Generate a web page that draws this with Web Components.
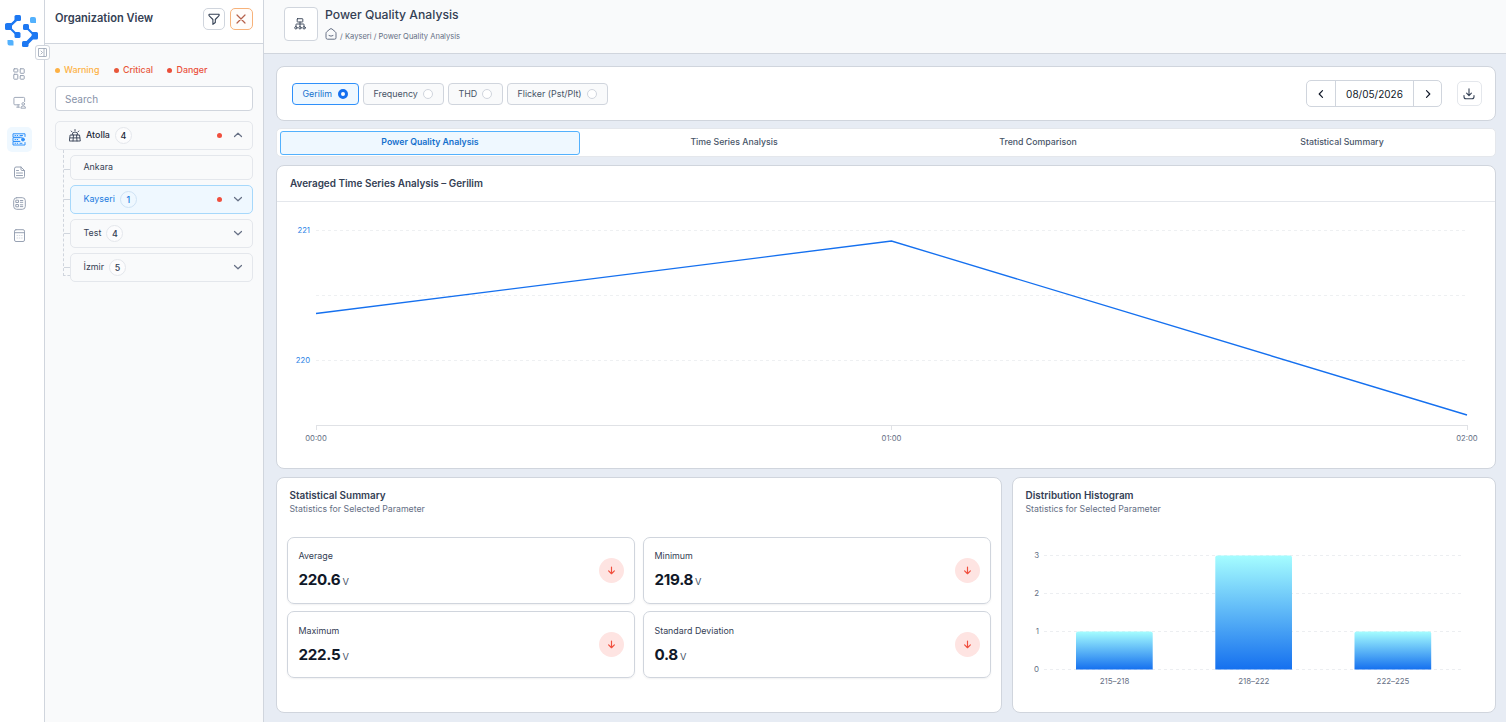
<!DOCTYPE html>
<html lang="en">
<head>
<meta charset="utf-8">
<title>Power Quality Analysis</title>
<style>
  body {
    margin: 0;
    height: 722px;
    overflow: hidden;
    font-family: Inter, "Liberation Sans", sans-serif;
    font-size: 8.9px;
    line-height: 12px;
    color: #344054;
    --line: #d0d5dd;
    --soft: #e4e7ec;
  }
</style>
</head>
<body>
<power-app></power-app>

<script>
const icons = {
  logo: ['0 0 34 34', `
    <g fill="#1d78f2" stroke="#1d78f2">
      <path d="M12 5L5 12M4 13l8 8M21 13l8 8M29 21l-8 8" stroke-width="2"/>
      <rect x="9.500" y="1" width="6.500" height="6" rx="1.500" stroke="none"/>
      <path d="M2 9h4.500l4.500-4 1.500 1.500L7 11.500V16H1.500Q0 16 0 14.500V10.500Q0 9 2 9z" stroke="none"/>
      <rect x="9.500" y="18" width="6" height="6" rx="1.500" stroke="none"/>
      <rect x="18" y="10" width="6" height="6" rx="1.500" stroke="none"/>
      <path d="M27 18h4.500q1.500 0 1.500 1.500v4.500q0 1.500-1.500 1.500H28l-5 5v-4l3.500-3.500z" stroke="none"/>
      <rect x="17" y="27" width="6.500" height="6" rx="1.500" stroke="none"/>
    </g>
    <path d="M25 4.500q0-1.500 1.500-1.500H29q2 0 2 2V9h-4.500Q25 9 25 7.500zM2.500 26H7q1.500 0 1.500 1.500v4H4.500q-2 0-2-2z" fill="#53b1fd" stroke="none"/>`],
  grid: ['0 0 12 12', '<rect x=".8" y=".8" width="4" height="3.200" rx=".5"/><rect x="7.200" y=".8" width="4" height="4.500" rx=".5"/><rect x=".8" y="6.300" width="4" height="4.900" rx=".5"/><rect x="7.200" y="7.600" width="4" height="3.600" rx=".5"/>'],
  monitor: ['0 0 14 13', '<path d="M7 9H2Q1 9 1 8V2q0-1 1-1h9.500q1 0 1 1v3.500M4 11.500h3M5.500 9v2.500"/><circle cx="11" cy="8" r="1.400"/><path d="M8.500 12.200q0-2 2.500-2t2.500 2z"/>'],
  server: ['0 0 14 13', '<path d="M13 3.500V.8H1v3.400h9M8 4.700H1v3.600h6.500M8 8.600H1V12h12V9.500M3 2.500h.5M5.200 2.500h.5M3 6.500h.5M5.200 6.500h.5M3 10.300h.5M5.200 10.300h.5M8 2.500h2.500M8 10.300h2"/><circle cx="11" cy="6.500" r="1.500" fill="currentColor"/>'],
  doc: ['0 0 12 13', '<path d="M1 2.500q0-1.500 1.500-1.500h5L11 4.500v6q0 1.500-1.500 1.500h-7Q1 12 1 10.500z"/><path d="M7.500 1v2.500q0 1 1 1H11M3 4.500h2M3 7h6M3 9.500h6"/>'],
  list: ['0 0 13 13', '<rect x=".7" y=".7" width="11.600" height="11.600" rx="3"/><rect x="3.200" y="3.200" width="2.300" height="2.300"/><rect x="3.200" y="7.500" width="2.300" height="2.300"/><path d="M7.300 3.500h2.500M7.300 5.300h2.500M7.300 7.800h2.500M7.300 9.600h2.500"/>'],
  calendar: ['0 0 12 13', '<rect x="1" y=".7" width="10" height="11.800" rx="1.500"/><path d="M1 3.700h10"/><path d="M3.500 6.500h.7M5.700 6.500h.7M8 6.500h.7M3.500 9h.7M5.700 9h.7M8 9h.7" stroke-opacity=".4"/>'],
  expand: ['0 0 9 9', '<rect x=".5" y=".5" width="8" height="8" rx=".5"/><path d="M6 .5v8M3 3l1.500 1.500L3 6"/>'],
  filter: ['0 0 12 12', '<path d="M1.200 1.200h9.600q.8 1-.2 2L7.300 6.500v3l-2.400 1.800V6.500L1.500 3.200Q.5 2.200 1.200 1.200z"/>'],
  close: ['0 0 10 10', '<path d="M1 1l8 8M9 1L1 9"/>'],
  plant: ['0 0 12 13', '<path d="M1.500 6h9l.8 6H.7zM1.200 8.900h9.600M4.500 6l-.5 6M7.500 6l.5 6M3 6q0-3 3-3t3 3M6 .5v1.200M2.200 2l.8.900M9.800 2l-.8.900"/>'],
  up: ['0 0 10 10', '<path d="M1.500 6.500L5 3.200l3.500 3.300"/>'],
  down: ['0 0 10 10', '<path d="M1.500 3.500L5 6.800l3.500-3.300"/>'],
  left: ['0 0 10 10', '<path d="M6.500 1.700L3.200 5l3.300 3.300"/>'],
  right: ['0 0 10 10', '<path d="M3.500 1.700L6.800 5 3.500 8.300"/>'],
  network: ['0 0 12 12', '<rect x="3.200" y=".7" width="5.600" height="3.300" rx=".4"/><path d="M6 4v4.500M2 8.500V6.500q0-.5.500-.5h7q.5 0 .5.500v2"/><circle cx="1.900" cy="9.800" r="1.200"/><circle cx="6" cy="9.800" r="1.200"/><circle cx="10.100" cy="9.800" r="1.200"/>'],
  home: ['0 0 12 12', '<path d="M1 5.200q0-.8.700-1.400L5 1q1-.7 2 0l3.300 2.800q.7.600.7 1.400v4.600q0 1.400-1.400 1.400H2.400Q1 11.200 1 9.800zM4 7.600q2 1.300 4 0"/>'],
  download: ['0 0 12 12', '<path d="M6 .8v6.700M3.600 5.200L6 7.600l2.400-2.400"/><path d="M1 7.500v1.200q0 2 2 2h6q2 0 2-2V7.500"/>'],
  arrow: ['0 0 10 10', '<path d="M5 1.200v7.300M1.800 5.400L5 8.600l3.200-3.200"/>']
};

const define = (name, render) => {
  customElements.define(name, class extends HTMLElement {
    connectedCallback() {
      if (this.shadowRoot) return;
      const template = document.createElement('template');
      template.innerHTML = `<style>* { box-sizing: border-box; }</style>${render(this)}`;
      this.attachShadow({ mode: 'open' });
      this.shadowRoot.append(template.content.cloneNode(true));
    }
  });
};

define('ui-icon', (el) => {
  const [box, body] = icons[el.getAttribute('name')];
  return `
    <style>
      :host { display: inline-flex; flex: none; width: 12px; height: 12px; }
      svg { width: 100%; height: 100%; fill: none; stroke: currentColor; stroke-linecap: round; stroke-linejoin: round; stroke-width: var(--stroke, 1); }
    </style>
    <svg viewBox="${box}">${body}</svg>`;
});

define('side-rail', () => `
  <style>
    :host { display: flex; flex-direction: column; align-items: center; width: 45px; height: 722px; border-right: 1px solid var(--line); background: #fff; position: relative; color: #98a2b3; box-sizing: border-box; padding: 14px 6px 0 0; }
    .logo { width: 34px; height: 34px; margin: 0 -1px 0 5px; }
    nav { display: flex; flex-direction: column; align-items: center; padding-top: 13px; }
    span { display: flex; align-items: center; justify-content: center; width: 25px; height: 25px; border-radius: 5px; }
    span ui-icon { width: 13px; height: 13px; }
    .active { background: #eff8ff; color: #2e90fa; }
    .toggle { position: absolute; left: 35px; top: 45px; width: 15px; height: 15px; border: 1px solid var(--line); border-radius: 3px; background: #fff; z-index: 2; }
    .toggle ui-icon { width: 9px; height: 9px; --stroke: .8; }
  </style>
  <ui-icon class="logo" name="logo"></ui-icon>
  <nav>
    <span><ui-icon name="grid" style="width:12px;height:12px"></ui-icon></span>
    <span style="margin-top:4px"><ui-icon name="monitor"></ui-icon></span>
    <span class="active" style="margin-top:12px"><ui-icon name="server" style="width:14px"></ui-icon></span>
    <span style="margin-top:8px"><ui-icon name="doc"></ui-icon></span>
    <span style="margin-top:6px"><ui-icon name="list"></ui-icon></span>
    <span style="margin-top:7px"><ui-icon name="calendar"></ui-icon></span>
  </nav>
  <span class="toggle"><ui-icon name="expand"></ui-icon></span>`);

define('tree-row', (el) => {
  const count = el.getAttribute('count');
  const arrow = el.getAttribute('arrow');
  return `
    <style>
      :host { display: flex; align-items: center; box-sizing: border-box; height: 29px; padding: 0 9px 1px 12.500px; border: 1px solid var(--soft); border-radius: 5px; background: #f9fafb; position: relative; }
      :host([selected]) { background: #eff8ff; border-color: #a6d8fb; color: #1a7ae0; }
      :host([root]) { font-weight: 500; padding-left: 13px; color: #1d2939; }
      :host([leaf]) { height: 25px; }
      :host(:not([root]))::before { content: ''; position: absolute; left: -7px; top: 13px; width: 6px; border-top: 1px dashed var(--line); }
      .plant { width: 12px; height: 13px; margin-right: 5px; --stroke: .9; color: #344054; }
      .count { width: 17px; height: 17px; border: 1px solid var(--soft); border-radius: 50%; text-align: center; line-height: 15px; margin-left: 5px; background: #fcfcfd; font-weight: 500; }
      :host([selected]) .count { background: #eff8ff; border-color: #cfe3f5; }
      .space { flex: 1; }
      .dot { width: 5px; height: 5px; border-radius: 50%; background: #f04f3e; margin-right: 11px; }
      .arrow { width: 10px; height: 10px; color: #667085; --stroke: 1.2; }
    </style>
    ${el.hasAttribute('root') ? '<ui-icon class="plant" name="plant"></ui-icon>' : ''}
    <slot></slot>
    ${count ? `<span class="count">${count}</span>` : ''}
    <span class="space"></span>
    ${el.hasAttribute('alert') ? '<span class="dot"></span>' : ''}
    ${arrow ? `<ui-icon class="arrow" name="${arrow}"></ui-icon>` : ''}`;
});

define('org-panel', () => `
  <style>
    :host { display: block; box-sizing: border-box; width: 219px; height: 722px; border-right: 1px solid var(--line); background: #f9fafb; }
    header { display: flex; align-items: flex-start; height: 44px; padding: 8px 10px 0; border-bottom: 1px solid var(--line); background: #fff; }
    h2 { flex: 1; margin: 3px 0 0; font-size: 11.100px; line-height: 14px; font-weight: 600; color: #344054; white-space: nowrap; }
    button { display: flex; align-items: center; justify-content: center; width: 22px; height: 22px; padding: 0; border: 1px solid var(--line); border-radius: 5px; background: #fff; color: #344054; }
    .close { width: 23px; margin-left: 5px; padding-right: 1px; border-color: #f7b27a; background: #fffcfa; color: #b5604a; }
    .close ui-icon { width: 10px; height: 10px; --stroke: 1.2; }
    .legend { display: flex; height: 32px; padding: 20px 10px 0; font-weight: 500; }
    .legend span { display: flex; align-items: center; margin-right: 14.500px; }
    .legend span::before { content: ''; width: 5px; height: 5px; border-radius: 50%; background: currentColor; margin-right: 4px; }
    .search { display: flex; align-items: center; height: 25px; margin: 10px 10px 10px; padding: 0 0 0 9px; border: 1px solid var(--line); border-radius: 4px; background: #fff; color: #8792a8; font-size: 10px; }
    .root { margin: 0 10px; }
    .children { display: flex; flex-direction: column; gap: 5px; margin: 0 10px 0 18px; padding: 5px 0 0 7px; position: relative; }
    .children::before { content: ''; position: absolute; left: 0; top: 0; width: 6px; height: 125px; border-left: 1px dashed var(--line); border-bottom: 1px dashed var(--line); }
  </style>
  <header>
    <h2>Organization View</h2>
    <button><ui-icon name="filter" style="--stroke:1.1"></ui-icon></button>
    <button class="close"><ui-icon name="close"></ui-icon></button>
  </header>
  <div class="legend">
    <span style="color:#fdb144">Warning</span>
    <span style="color:#e8573a">Critical</span>
    <span style="color:#ea4f3a">Danger</span>
  </div>
  <div class="search">Search</div>
  <tree-row class="root" root count="4" alert arrow="up">Atolla</tree-row>
  <div class="children">
    <tree-row leaf>Ankara</tree-row>
    <tree-row selected count="1" alert arrow="down">Kayseri</tree-row>
    <tree-row count="4" arrow="down">Test</tree-row>
    <tree-row count="5" arrow="down">İzmir</tree-row>
  </div>`);

define('page-header', () => `
  <style>
    :host { display: flex; box-sizing: border-box; height: 54px; padding: 7px 20px 0; background: #f9fafb; border-bottom: 1px solid var(--line); }
    .box { display: flex; align-items: center; justify-content: center; width: 34px; height: 34px; padding-right: 2px; border: 1px solid var(--line); border-radius: 4px; background: #fff; }
    h1 { margin: 0 0 7px; font-size: 12.200px; line-height: 16px; font-weight: 500; color: #344054; }
    .text { padding-left: 7px; }
    .crumbs { display: flex; align-items: center; font-size: 7.550px; line-height: 10px; color: #667085; white-space: pre; }
    .crumbs span { padding-top: 2px; }
    .crumbs ui-icon { margin-top: -4px; margin-right: 1px; }
  </style>
  <div class="box"><ui-icon name="network" style="--stroke:.9"></ui-icon></div>
  <div class="text">
    <h1>Power Quality Analysis</h1>
    <div class="crumbs"><ui-icon name="home"></ui-icon><span> / Kayseri / Power Quality Analysis</span></div>
  </div>`);

define('param-chip', () => `
  <style>
    :host { display: flex; align-items: center; justify-content: space-between; box-sizing: border-box; height: 22px; padding: 0 10px 0 9.500px; border: 1px solid var(--line); border-radius: 4px; background: #f9fafb; white-space: nowrap; color: #475467; }
    i { width: 10px; height: 10px; border: 1px solid var(--line); border-radius: 50%; background: #fff; }
    :host([checked]) { background: #eff8ff; border-color: #2e90fa; color: #1570cd; }
    :host([checked]) i { border: 3px solid #1570ef; }
  </style>
  <slot></slot><i></i>`);

define('tool-bar', () => `
  <style>
    :host { display: flex; align-items: center; box-sizing: border-box; height: 55px; padding: 0 13px 0 15px; border: 1px solid var(--line); border-radius: 8px; background: #fff; }
    .chips { display: flex; gap: 4px; flex: 1; }
    .date { display: grid; grid-template-columns: 28px 78px 28px; height: 27px; box-sizing: border-box; border: 1px solid var(--line); border-radius: 5px; color: #101828; font-size: 10px; }
    .date span { display: flex; align-items: center; justify-content: center; }
    .date span + span { border-left: 1px solid var(--line); }
    .date ui-icon { width: 10px; height: 10px; --stroke: 1.200; }
    .download { display: flex; align-items: center; justify-content: center; width: 25px; height: 25px; margin-left: 15px; padding: 0 1px 0 0; border: 1px solid var(--soft); border-radius: 5px; }
    .download ui-icon { --stroke: 1.100; }
  </style>
  <div class="chips">
    <param-chip checked style="width:67px">Gerilim</param-chip>
    <param-chip style="width:81px">Frequency</param-chip>
    <param-chip style="width:55px">THD</param-chip>
    <param-chip style="width:101px">Flicker (Pst/Plt)</param-chip>
  </div>
  <div class="date">
    <span><ui-icon name="left"></ui-icon></span>
    <span>08/05/2026</span>
    <span><ui-icon name="right"></ui-icon></span>
  </div>
  <div class="download"><ui-icon name="download"></ui-icon></div>`);

define('tab-bar', () => `
  <style>
    :host { display: grid; grid-template-columns: repeat(4, 1fr); gap: 4px; box-sizing: border-box; height: 29px; padding: 2px 3px 1px; border: 1px solid var(--soft); border-radius: 5px; background: #fff; color: #475467; font-size: 8.750px; font-weight: 500; }
    span { display: flex; align-items: center; justify-content: center; height: 24px; padding-bottom: 3px; border-radius: 3px; }
    .active { border: 1px solid #53b1fd; background: #eff8ff; color: #1570cd; font-weight: 600; padding-bottom: 2px; }
  </style>
  <span class="active">Power Quality Analysis</span>
  <span>Time Series Analysis</span>
  <span>Trend Comparison</span>
  <span>Statistical Summary</span>`);

define('ui-card', (el) => {
  const subtitle = el.getAttribute('subtitle');
  return `
    <style>
      :host { display: flex; flex-direction: column; box-sizing: border-box; border: 1px solid var(--line); border-radius: 8px; background: #fff; overflow: hidden; }
      header { height: 36px; flex: none; padding: 10px 13px 0; border-bottom: 1px solid var(--soft); }
      header.plain { height: 59px; border: 0; padding: 10px 12.500px 0; }
      h3 { margin: 0; font-size: 9.950px; line-height: 14px; font-weight: 600; color: #344054; }
      p { margin: 1px 0 0; color: #667085; font-size: 8.750px; line-height: 13px; }
    </style>
    <header class="${subtitle ? 'plain' : ''}">
      <h3>${el.getAttribute('heading')}</h3>
      ${subtitle ? `<p>${subtitle}</p>` : ''}
    </header>
    <slot></slot>`;
});

define('stat-card', (el) => `
  <style>
    :host { display: flex; align-items: center; justify-content: space-between; box-sizing: border-box; height: 67px; padding: 0 10px 0 10.500px; border: 1px solid var(--line); border-radius: 7px; box-shadow: 0 1px 2px rgba(16, 24, 40, .06); }
    .text { padding-top: var(--shift, 1px); }
    .value { display: flex; align-items: baseline; margin-top: 8px; font-size: 15.200px; line-height: 20px; font-weight: 700; color: #101828; letter-spacing: -.3px; }
    small { font-size: 9.300px; font-weight: 400; color: #475467; margin-left: 2px; }
    .badge { display: flex; align-items: center; justify-content: center; width: 25px; height: 25px; border-radius: 50%; background: #fee4e2; color: #f04f3e; }
    .badge ui-icon { width: 9px; height: 9px; --stroke: 1.300; }
  </style>
  <div class="text">
    <div><slot></slot></div>
    <div class="value">${el.getAttribute('value')}<small>V</small></div>
  </div>
  <span class="badge"><ui-icon name="arrow"></ui-icon></span>`);

define('line-chart', () => {
  const left = 39;
  const right = 1190;
  const mid = 614.5;
  const grid = [28.5, 93.5, 158.5].map((y) => `<path class="grid" d="M${left} ${y}H${right}"/>`).join('');
  const times = [[left, '00:00'], [mid, '01:00'], [right, '02:00']]
    .map(([x, label]) => `<path class="axis" d="M${Math.floor(x) + 0.5} 223v5"/><text x="${x}" y="239" text-anchor="middle">${label}</text>`).join('');
  return `
    <style>
      :host { display: block; }
      svg { display: block; }
      .grid { stroke: #eef0f2; stroke-dasharray: 3 3; }
      .axis { stroke: #e0e2e6; }
      text { font-size: 7.700px; fill: #667085; }
      .value { fill: #2e84e6; text-anchor: end; }
    </style>
    <svg width="1218" height="266">
      ${grid}
      <path class="axis" d="M${left} 223.5H${right}"/>
      ${times}
      <text class="value" x="33" y="31">221</text>
      <text class="value" x="33" y="161">220</text>
      <path d="M${left} 111.500L${mid} 39L${right} 213" fill="none" stroke="#1570ef" stroke-width="1.330"/>
    </svg>`;
});

define('bar-chart', () => {
  // one unit of the y axis is 38px, baseline at 132.5
  const base = 132.5;
  const unit = 38;
  const bars = [[63, 1, '215–218'], [202.3, 3, '218–222'], [341.5, 1, '222–225']];
  const grid = [0, 1, 2, 3].map((n) => {
    const y = base - n * unit;
    return `<path d="M31 ${y}H450" stroke="#eceef1" stroke-dasharray="3 3"/><text x="26" y="${y + 2.5}" text-anchor="end">${n}</text>`;
  }).join('');
  const rects = bars.map(([x, n, label]) => {
    const y = base - n * unit;
    return `<path d="M${x} ${base}V${y + 2}q0-2 2-2h72.700q2 0 2 2V${base}z" fill="url(#fade)"/><text x="${x + 38.5}" y="147" text-anchor="middle">${label}</text>`;
  }).join('');
  return `
    <style>
      :host { display: block; }
      svg { display: block; }
      text { font-size: 7.900px; fill: #667085; }
    </style>
    <svg width="482" height="175">
      <defs>
        <linearGradient id="fade" x1="0" y1="0" x2="0" y2="1">
          <stop offset="0" stop-color="#a5fdff"/>
          <stop offset="1" stop-color="#1570ef"/>
        </linearGradient>
      </defs>
      ${grid}
      ${rects}
    </svg>`;
});

define('power-app', () => `
  <style>
    :host { display: flex; height: 722px; background: #e7ecf4; }
    main { flex: 1; min-width: 0; }
    .content { display: flex; flex-direction: column; padding: 12px 10px 0 12px; }
    tab-bar { margin: 7px 0 8px; }
    .chart { height: 304px; }
    .bottom { display: grid; grid-template-columns: 726px 1fr; gap: 10px; margin-top: 8px; }
    .bottom ui-card { height: 236px; }
    .stats { display: grid; grid-template-columns: 1fr 1fr; gap: 7px 8px; padding: 0 10px; }
    .stats stat-card:nth-child(n + 3) { --shift: 3px; }
  </style>
  <side-rail></side-rail>
  <org-panel></org-panel>
  <main>
    <page-header></page-header>
    <div class="content">
      <tool-bar></tool-bar>
      <tab-bar></tab-bar>
      <ui-card class="chart" heading="Averaged Time Series Analysis – Gerilim"><line-chart></line-chart></ui-card>
      <div class="bottom">
        <ui-card heading="Statistical Summary" subtitle="Statistics for Selected Parameter">
          <div class="stats">
            <stat-card value="220.6">Average</stat-card>
            <stat-card value="219.8">Minimum</stat-card>
            <stat-card value="222.5">Maximum</stat-card>
            <stat-card value="0.8">Standard Deviation</stat-card>
          </div>
        </ui-card>
        <ui-card heading="Distribution Histogram" subtitle="Statistics for Selected Parameter"><bar-chart></bar-chart></ui-card>
      </div>
    </div>
  </main>`);
</script>
</body>
</html>
